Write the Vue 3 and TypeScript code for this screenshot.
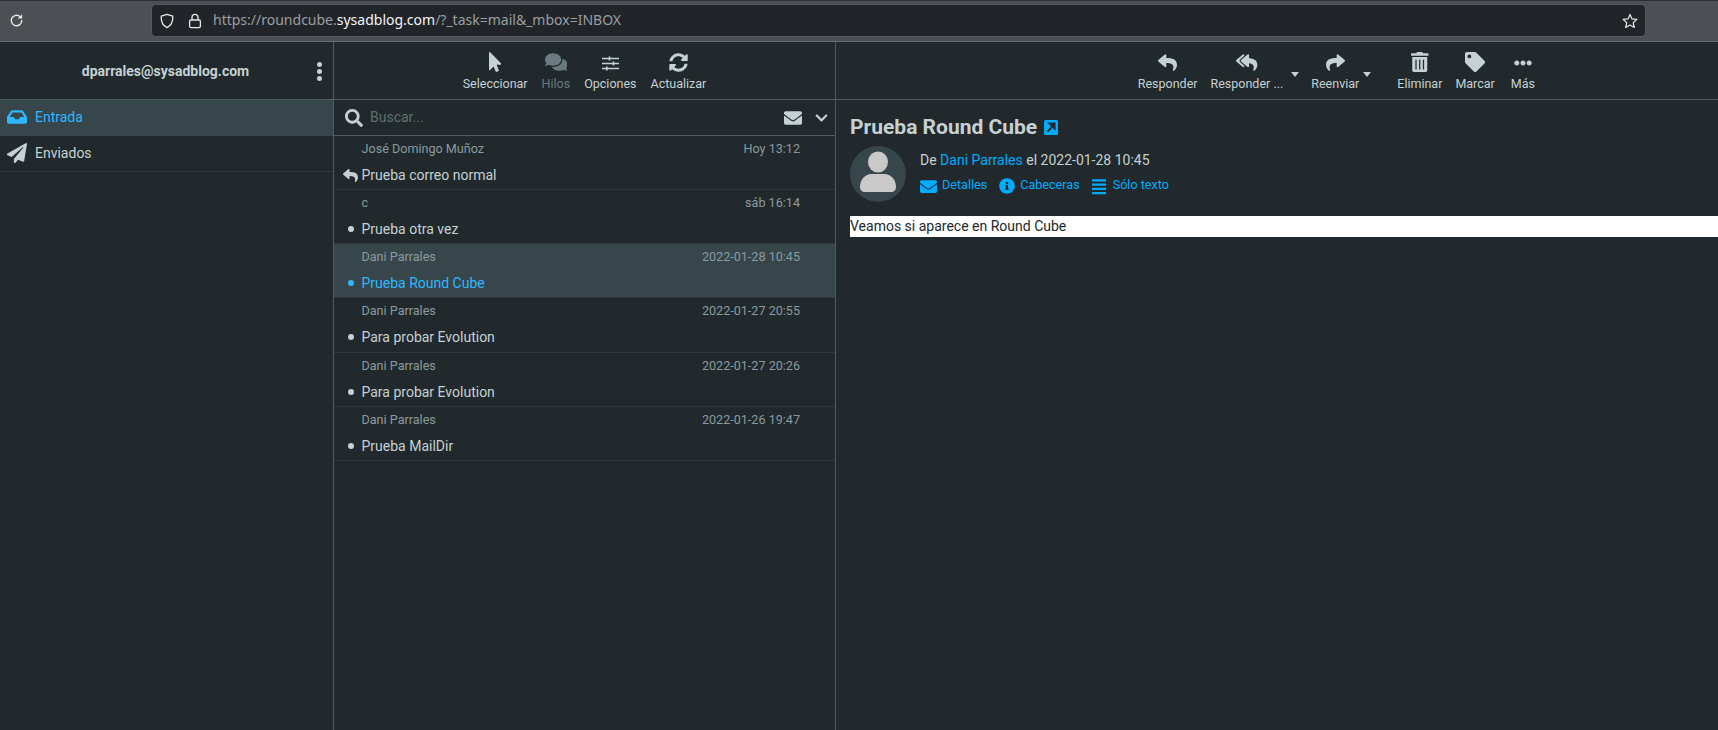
<script setup lang="ts">
type Icon = { w: number; d: string };

const icons: Record<string, Icon> = {
  reply: { w: 512, d: "M8.309 189.836L184.313 37.851C199.719 24.546 224 35.347 224 56.015v80.053c160.629 1.839 288 34.032 288 186.258 0 61.441-39.581 122.309-83.333 154.132-13.653 9.931-33.111-2.533-28.077-18.631 45.344-145.012-21.507-183.51-176.59-185.742V360c0 20.7-24.3 31.453-39.687 18.164l-176.004-152c-11.071-9.562-11.086-26.753 0-36.328z" },
  replyAll: { w: 576, d: "M136.309 189.836L312.313 37.851C327.72 24.546 352 35.348 352 56.015v82.763c129.182 10.231 224 52.212 224 183.548 0 61.441-39.582 122.309-83.333 154.132-13.653 9.931-33.111-2.533-28.077-18.631 38.512-123.162-3.922-169.482-112.59-182.015v84.175c0 20.701-24.3 31.453-39.687 18.164L136.309 226.164c-11.071-9.561-11.086-26.753 0-36.328zm-128 36.328L184.313 378.15C199.7 391.439 224 380.687 224 359.986v-15.818l-108.606-93.785A55.96 55.96 0 0 1 96 207.998a55.953 55.953 0 0 1 19.393-42.38L224 71.832V56.015c0-20.667-24.28-31.469-39.687-18.164L8.309 189.836c-11.086 9.575-11.071 26.767 0 36.328z" },
  share: { w: 512, d: "M503.691 189.836L327.687 37.851C312.281 24.546 288 35.347 288 56.015v80.053C127.371 137.907 0 170.1 0 322.326c0 61.441 39.581 122.309 83.333 154.132 13.653 9.931 33.111-2.533 28.077-18.631C66.066 312.814 132.917 274.316 288 272.085V360c0 20.7 24.3 31.453 39.687 18.164l176.004-152c11.071-9.562 11.086-26.753 0-36.328z" },
  trash: { w: 448, d: "M32 464a48 48 0 0 0 48 48h288a48 48 0 0 0 48-48V128H32zm272-256a16 16 0 0 1 32 0v224a16 16 0 0 1-32 0zm-96 0a16 16 0 0 1 32 0v224a16 16 0 0 1-32 0zm-96 0a16 16 0 0 1 32 0v224a16 16 0 0 1-32 0zM432 32H312l-9.4-18.7A24 24 0 0 0 281.1 0H166.8a23.72 23.72 0 0 0-21.4 13.3L136 32H16A16 16 0 0 0 0 48v32a16 16 0 0 0 16 16h416a16 16 0 0 0 16-16V48a16 16 0 0 0-16-16z" },
  tag: { w: 512, d: "M0 252.118V48C0 21.49 21.49 0 48 0h204.118a48 48 0 0 1 33.941 14.059l211.882 211.882c18.745 18.745 18.745 49.137 0 67.882L293.823 497.941c-18.745 18.745-49.137 18.745-67.882 0L14.059 286.059A48 48 0 0 1 0 252.118zM112 64c-26.51 0-48 21.49-48 48s21.49 48 48 48 48-21.49 48-48-21.49-48-48-48z" },
  more: { w: 512, d: "M328 256c0 39.8-32.2 72-72 72s-72-32.2-72-72 32.2-72 72-72 72 32.2 72 72zm104-72c-39.8 0-72 32.2-72 72s32.2 72 72 72 72-32.2 72-72-32.2-72-72-72zm-352 0c-39.8 0-72 32.2-72 72s32.2 72 72 72 72-32.2 72-72-32.2-72-72-72z" },
  pointer: { w: 320, d: "M302.189 329.126H196.105l55.831 135.993c3.889 9.428-.555 19.999-9.444 23.999l-49.165 21.427c-9.165 4-19.443-.571-23.332-9.714l-53.053-129.136-86.664 89.138C18.729 472.71 0 463.554 0 447.977V18.299C0 1.899 19.921-6.096 30.277 5.443l284.412 292.542c11.472 11.179 3.007 31.141-12.5 31.141z" },
  comments: { w: 576, d: "M416 192c0-88.4-93.1-160-208-160S0 103.6 0 192c0 34.3 14.1 65.9 38 92-13.4 30.2-35.5 54.2-35.8 54.5-2.2 2.3-2.8 5.7-1.5 8.7S4.8 352 8 352c36.6 0 66.9-12.3 88.7-25 32.2 15.7 70.3 25 111.3 25 114.9 0 208-71.6 208-160zm122 220c23.9-26 38-57.7 38-92 0-66.9-53.5-124.2-129.3-148.1.9 6.6 1.3 13.3 1.3 20.1 0 105.9-107.7 192-240 192-10.8 0-21.3-.8-31.7-1.9C207.8 439.6 281.8 480 368 480c41 0 79.1-9.2 111.3-25 21.8 12.7 52.1 25 88.7 25 3.2 0 6.1-1.9 7.3-4.8 1.3-2.9.7-6.3-1.5-8.7-.3-.3-22.4-24.2-35.8-54.5z" },
  sliders: { w: 512, d: "M0 86h200V46h50v40h262v40H250v40h-50v-40H0zM0 236h320v-40h50v40h142v40H370v40h-50v-40H0zM0 386h120v-40h50v40h342v40H170v40h-50v-40H0z" },
  sync: { w: 512, d: "M370.72 133.28C339.458 104.008 298.888 87.962 255.848 88c-77.458.068-144.328 53.178-162.791 126.85-1.344 5.363-6.122 9.15-11.651 9.15H24.103c-7.498 0-13.194-6.807-11.807-14.176C33.933 94.924 134.813 8 256 8c66.448 0 126.791 26.136 171.315 68.685L463.03 40.97C478.149 25.851 504 36.559 504 57.941V192c0 13.255-10.745 24-24 24H345.941c-21.382 0-32.09-25.851-16.971-40.971l41.75-41.749zM32 296h134.059c21.382 0 32.09 25.851 16.971 40.971l-41.75 41.75c31.262 29.273 71.835 45.319 114.876 45.28 77.418-.07 144.315-53.144 162.787-126.849 1.344-5.363 6.122-9.15 11.651-9.15h57.304c7.498 0 13.194 6.807 11.807 14.176C478.067 417.076 377.187 504 256 504c-66.448 0-126.791-26.136-171.315-68.685L48.97 471.03C33.851 486.149 8 475.441 8 454.059V320c0-13.255 10.745-24 24-24z" },
  search: { w: 512, d: "M505 442.7L405.3 343c-4.5-4.5-10.6-7-17-7H372c27.6-35.3 44-79.7 44-128C416 93.1 322.9 0 208 0S0 93.1 0 208s93.1 208 208 208c48.3 0 92.7-16.4 128-44v16.3c0 6.4 2.5 12.5 7 17l99.7 99.7c9.4 9.4 24.6 9.4 33.9 0l28.3-28.3c9.4-9.4 9.4-24.6.1-34zM208 336c-70.7 0-128-57.2-128-128 0-70.7 57.2-128 128-128 70.7 0 128 57.2 128 128 0 70.7-57.2 128-128 128z" },
  envelope: { w: 512, d: "M502.3 190.8c3.9-3.1 9.7-.2 9.7 4.7V400c0 26.5-21.5 48-48 48H48c-26.5 0-48-21.5-48-48V195.6c0-5 5.7-7.8 9.7-4.7 22.4 17.4 52.1 39.5 154.1 113.6 21.1 15.4 56.7 47.8 92.2 47.6 35.7.3 72-32.8 92.3-47.6 102-74.1 131.6-96.3 154-113.7zM256 320c23.2.4 56.6-29.2 73.4-41.4 132.7-96.3 142.8-104.7 173.4-128.7 5.8-4.5 9.2-11.5 9.2-18.9v-19c0-26.5-21.5-48-48-48H48C21.5 64 0 85.5 0 112v19c0 7.4 3.4 14.3 9.2 18.9 30.6 23.9 40.7 32.4 173.4 128.7 16.8 12.2 50.2 41.8 73.4 41.4z" },
  chevron: { w: 448, d: "M207.029 381.476L12.686 187.132c-9.373-9.373-9.373-24.569 0-33.941l22.667-22.667c9.357-9.357 24.522-9.375 33.901-.04L224 284.505l154.745-154.021c9.379-9.335 24.544-9.317 33.901.04l22.667 22.667c9.373 9.373 9.373 24.569 0 33.941L240.971 381.476c-9.373 9.372-24.569 9.372-33.942 0z" },
  inbox: { w: 576, d: "M567.938 243.908L462.25 85.374A48.003 48.003 0 0 0 422.311 64H153.689a48 48 0 0 0-39.938 21.374L8.062 243.908A47.994 47.994 0 0 0 0 270.533V400c0 26.51 21.49 48 48 48h480c26.51 0 48-21.49 48-48V270.533a47.994 47.994 0 0 0-8.062-26.625zM162.252 128h251.497l85.333 128H376l-32 64H232l-32-64H76.918l85.334-128z" },
  plane: { w: 512, d: "M476 3.2L12.5 270.6c-18.1 10.4-15.8 35.6 2.2 43.2L121 358.4l287.3-253.2c5.5-4.9 13.3 2.6 8.6 8.3L176 407v80.5c0 23.6 28.5 32.9 42.5 15.8L282 426l124.6 52.2c14.2 6 30.4-2.9 33-18.2l72-432C515 7.8 493.3-6.8 476 3.2z" },
  info: { w: 512, d: "M256 8C119.043 8 8 119.083 8 256c0 136.997 111.043 248 248 248s248-111.003 248-248C504 119.083 392.957 8 256 8zm0 110c23.196 0 42 18.804 42 42s-18.804 42-42 42-42-18.804-42-42 18.804-42 42-42zm56 254c0 6.627-5.373 12-12 12h-88c-6.627 0-12-5.373-12-12v-24c0-6.627 5.373-12 12-12h12v-64h-12c-6.627 0-12-5.373-12-12v-24c0-6.627 5.373-12 12-12h64c6.627 0 12 5.373 12 12v100h12c6.627 0 12 5.373 12 12v24z" },
  lines: { w: 512, d: "M0 40h512v64H0zM0 168h512v64H0zM0 296h512v64H0zM0 424h512v64H0z" },
};

const listTools = [
  { label: "Seleccionar", icon: "pointer", h: 20 },
  { label: "Hilos", icon: "comments", h: 20, off: true },
  { label: "Opciones", icon: "sliders", h: 17 },
  { label: "Actualizar", icon: "sync", h: 19 },
];

const mailTools = [
  { label: "Responder", icon: "reply", h: 19 },
  { label: "Responder ...", icon: "replyAll", h: 19, caret: "wide" },
  { label: "Reenviar", icon: "share", h: 19, caret: "near" },
  { label: "Eliminar", icon: "trash", h: 20 },
  { label: "Marcar", icon: "tag", h: 20 },
  { label: "Más", icon: "more", h: 18, caret: "last" },
];

const folders = [
  { name: "Entrada", icon: "inbox", selected: true },
  { name: "Enviados", icon: "plane", selected: false },
];

const messages = [
  { from: "José Domingo Muñoz", date: "Hoy 13:12", subject: "Prueba correo normal", replied: true },
  { from: "c", date: "sáb 16:14", subject: "Prueba otra vez" },
  { from: "Dani Parrales", date: "2022-01-28 10:45", subject: "Prueba Round Cube", selected: true },
  { from: "Dani Parrales", date: "2022-01-27 20:55", subject: "Para probar Evolution" },
  { from: "Dani Parrales", date: "2022-01-27 20:26", subject: "Para probar Evolution" },
  { from: "Dani Parrales", date: "2022-01-26 19:47", subject: "Prueba MailDir" },
];

const headerLinks = [
  { label: "Detalles", icon: "envelope", size: 17 },
  { label: "Cabeceras", icon: "info", size: 16 },
  { label: "Sólo texto", icon: "lines", size: 14 },
];
</script>

<template>
  <div class="page">
    <header class="browserBar">
      <svg class="reload" viewBox="0 0 16 16" width="15" height="15">
        <path d="M13.6 8a5.6 5.6 0 1 1-1.7-4" fill="none" stroke="currentColor" stroke-width="1.5" stroke-linecap="round" />
        <path d="M14 1.2v4.6H9.4z" fill="currentColor" />
      </svg>
      <div class="urlBar">
        <svg class="shield" viewBox="0 0 16 16" width="16" height="16">
          <path d="M8 1.3 2.2 3.2c-.2 4.6.9 9 5.8 11.5 4.9-2.5 6-6.9 5.8-11.5z" fill="none" stroke="currentColor" stroke-width="1.3" stroke-linejoin="round" />
        </svg>
        <svg class="lock" viewBox="0 0 14 16" width="14" height="16">
          <rect x="1.6" y="7" width="10.8" height="7.6" rx="1.4" fill="none" stroke="currentColor" stroke-width="1.3" />
          <path d="M4 7V4.4a3 3 0 0 1 6 0V7" fill="none" stroke="currentColor" stroke-width="1.3" />
        </svg>
        <span class="url">https://roundcube.<b>sysadblog.com</b>/?_task=mail&amp;_mbox=INBOX</span>
        <svg class="star" viewBox="0 0 16 16" width="16" height="16">
          <path d="M8 1.4l2 4.5 4.9.5-3.7 3.3 1.1 4.8L8 12.1l-4.3 2.4 1.1-4.8L1.1 6.4 6 5.9z" fill="none" stroke="currentColor" stroke-width="1.2" stroke-linejoin="round" />
        </svg>
      </div>
    </header>

    <div class="layout">
      <aside class="folders">
        <div class="panelHead account">
          <span class="email">dparrales@sysadblog.com</span>
          <span class="kebab"><i /><i /><i /></span>
        </div>
        <div
          v-for="f in folders"
          :key="f.name"
          class="folder"
          :class="{ selected: f.selected }"
        >
          <svg class="folderIcon" :viewBox="`0 0 ${icons[f.icon].w} 512`"><path :d="icons[f.icon].d" /></svg>
          <span>{{ f.name }}</span>
        </div>
      </aside>

      <section class="list">
        <div class="panelHead toolbar center">
          <div v-for="t in listTools" :key="t.label" class="tool" :class="{ off: t.off }">
            <svg :viewBox="`0 0 ${icons[t.icon].w} 512`" :height="t.h"><path :d="icons[t.icon].d" /></svg>
            <span>{{ t.label }}</span>
          </div>
        </div>
        <div class="searchRow">
          <svg class="searchIcon" viewBox="0 0 512 512"><path :d="icons.search.d" /></svg>
          <span class="placeholder">Buscar...</span>
          <svg class="filterIcon" viewBox="0 0 512 512"><path :d="icons.envelope.d" /></svg>
          <svg class="chevron" viewBox="0 0 448 512"><path :d="icons.chevron.d" /></svg>
        </div>
        <div
          v-for="(m, i) in messages"
          :key="i"
          class="message"
          :class="{ selected: m.selected }"
        >
          <div class="meta">
            <span>{{ m.from }}</span>
            <span>{{ m.date }}</span>
          </div>
          <div class="subject">
            <span class="flag">
              <svg v-if="m.replied" class="replied" viewBox="0 0 512 512"><path :d="icons.reply.d" /></svg>
              <i v-else class="dot" />
            </span>
            <span>{{ m.subject }}</span>
          </div>
        </div>
      </section>

      <main class="content">
        <div class="panelHead toolbar right">
          <div
            v-for="t in mailTools"
            :key="t.label"
            class="tool"
            :class="t.caret"
          >
            <svg :viewBox="`0 0 ${icons[t.icon].w} 512`" :height="t.h"><path :d="icons[t.icon].d" /></svg>
            <span>{{ t.label }}</span>
            <i v-if="t.caret === 'wide' || t.caret === 'near'" class="caret" />
          </div>
        </div>
        <div class="mailHead">
          <h1>
            Prueba Round Cube
            <svg class="openIcon" viewBox="0 0 14 15" width="14" height="15">
              <rect width="14" height="15" rx="1.5" fill="#00acff" />
              <path d="M3.4 11.6 9.6 5.2M5.6 3.6h5v5z" stroke="#21292c" stroke-width="2" fill="#21292c" />
            </svg>
          </h1>
          <div class="sender">
            <div class="avatar">
              <svg viewBox="0 0 36 42" width="36" height="42">
                <ellipse cx="18" cy="11" rx="10" ry="10.5" fill="#c9c9c9" />
                <path d="M0 36c0-8 6-13 11-13h14c5 0 11 5 11 13 0 3-2 5-5 5H5c-3 0-5-2-5-5z" fill="#c9c9c9" />
              </svg>
            </div>
            <div class="senderInfo">
              <div class="fromLine">De <a>Dani Parrales</a> el 2022-01-28 10:45</div>
              <div class="links">
                <a v-for="l in headerLinks" :key="l.label">
                  <svg
                    viewBox="0 0 512 512"
                    preserveAspectRatio="none"
                    :class="l.icon"
                    :width="l.size"
                    :height="l.icon === 'lines' ? 17 : l.size"
                  ><path :d="icons[l.icon].d" /></svg>
                  {{ l.label }}
                </a>
              </div>
            </div>
          </div>
        </div>
        <div class="mailBody">Veamos si aparece en Round Cube</div>
      </main>
    </div>
  </div>
</template>

<style scoped>
.page {
  display: flex;
  flex-direction: column;
  height: 730px;
  overflow: hidden;
  background: #21292c;
  color: #c5d1d3;
  font-family: Roboto, "Liberation Sans", sans-serif;
  font-size: 14px;
}

.browserBar {
  display: flex;
  align-items: center;
  flex: none;
  height: 42px;
  box-sizing: border-box;
  padding: 0 73px 1px 9px;
  gap: 128px;
  color: #e8e8e8;
  background: #4c4f54;
  border-top: 1px solid #2b2d30;
  border-bottom: 1px solid #6a6d70;
}

.reload {
  flex: none;
}

.urlBar {
  display: flex;
  align-items: center;
  flex: 1;
  height: 31px;
  box-sizing: border-box;
  padding: 0 7px 0 7px;
  background: #212529;
  border-radius: 4px;
  box-shadow: 0 0 0 1px #55585c;
}

.lock {
  margin-left: 13px;
}

.url {
  flex: 1;
  margin-left: 11px;
  padding-bottom: 2px;
  font-family: "Noto Sans", sans-serif;
  font-size: 14px;
  color: #9b9ea1;
}

.url b {
  font-weight: 400;
  color: #f4f4f4;
}

.layout {
  display: flex;
  flex: 1;
  min-height: 0;
}

.folders {
  flex: none;
  width: 334px;
  box-sizing: border-box;
  border-right: 1px solid #4d5e63;
}

.list {
  flex: none;
  width: 502px;
  box-sizing: border-box;
  border-right: 1px solid #4d5e63;
}

.content {
  flex: 1;
  min-width: 0;
}

.panelHead {
  display: flex;
  align-items: center;
  height: 58px;
  box-sizing: border-box;
  border-bottom: 1px solid #4d5e63;
}

.account {
  justify-content: center;
  position: relative;
}

.email {
  margin-right: 2px;
  font-size: 14px;
  font-weight: 700;
}

.kebab {
  position: absolute;
  left: 317px;
  top: 20px;
  display: flex;
  flex-direction: column;
  gap: 2px;
}

.kebab i {
  width: 5px;
  height: 5px;
  background: #c5d1d3;
  border-radius: 50%;
}

.folder {
  display: flex;
  align-items: center;
  height: 36px;
  box-sizing: border-box;
  padding: 0 0 2px 7px;
  gap: 8px;
  border-bottom: 1px solid #2f393d;
}

.folder.selected {
  color: #2db8ff;
  background: #37464b;
  border-bottom-color: #37464b;
}

.folderIcon {
  width: 20px;
  height: 20px;
  fill: currentColor;
}

.toolbar {
  gap: 14px;
}

.toolbar.center {
  justify-content: center;
}

.toolbar.right {
  justify-content: flex-end;
  gap: 13px;
  padding-right: 183px;
}

.tool {
  position: relative;
  display: flex;
  flex-direction: column;
  align-items: center;
  justify-content: flex-end;
  height: 43px;
  margin-bottom: 1px;
  font-size: 12.5px;
  line-height: 16px;
  white-space: nowrap;
}

.tool svg {
  flex: none;
  margin-bottom: 4px;
  fill: currentColor;
}

.tool.off {
  color: #6b7a7f;
}

.tool.wide {
  margin-right: 15px;
}

.tool.near {
  margin-right: 25px;
}

.tool.last {
  margin-left: 3px;
}

.caret {
  position: absolute;
  top: 23px;
  right: -16px;
  width: 0;
  height: 0;
  border: 4px solid transparent;
  border-top: 5px solid #c5d1d3;
  border-bottom: 0;
}

.tool.near .caret {
  right: -12px;
}

.searchRow {
  display: flex;
  align-items: center;
  height: 36px;
  box-sizing: border-box;
  padding: 0 7px 0 11px;
  border-bottom: 1px solid #4d5e63;
}

.searchIcon {
  width: 18px;
  height: 18px;
  fill: #c5d1d3;
}

.placeholder {
  flex: 1;
  margin-left: 7px;
  padding-bottom: 2px;
  color: #5f6e73;
}

.filterIcon {
  width: 18px;
  height: 18px;
  fill: #c5d1d3;
}

.chevron {
  width: 13px;
  height: 14px;
  margin-left: 13px;
  fill: #c5d1d3;
}

.message {
  height: 54.15px;
  box-sizing: border-box;
  padding: 4px 35px 0 27.5px;
  border-bottom: 1px solid #2f393d;
}

.message.selected {
  background: #37464b;
}

.meta {
  display: flex;
  justify-content: space-between;
  height: 18px;
  font-size: 12.6px;
  line-height: 18px;
  color: #8b9a9f;
}

.subject {
  position: relative;
  margin-top: 8px;
  line-height: 18px;
  font-size: 14px;
}

.message.selected .subject {
  color: #2db8ff;
}

.flag {
  position: absolute;
  left: -19px;
  top: 2px;
  width: 16px;
  height: 14px;
  display: flex;
  align-items: center;
  justify-content: center;
}

.dot {
  width: 6px;
  height: 6px;
  background: currentColor;
  border-radius: 50%;
}

.replied {
  width: 15px;
  height: 15px;
  fill: #c5d1d3;
}

.mailHead {
  padding: 15px 13px 0 14px;
}

h1 {
  display: flex;
  align-items: center;
  gap: 7px;
  margin: 0;
  font-size: 21px;
  line-height: 24px;
  font-weight: 700;
}

.sender {
  display: flex;
  margin-top: 7px;
  gap: 14px;
}

.avatar {
  display: flex;
  align-items: flex-end;
  justify-content: center;
  width: 56px;
  height: 56px;
  padding-bottom: 9px;
  box-sizing: border-box;
  background: #37464b;
  border-radius: 50%;
}

.senderInfo {
  padding-top: 5px;
}

.fromLine {
  line-height: 18px;
}

a {
  color: #00acff;
}

.links {
  display: flex;
  gap: 12px;
  margin-top: 7px;
  font-size: 12.6px;
  line-height: 18px;
}

.links a {
  display: flex;
  align-items: center;
  gap: 5px;
}

.links svg {
  margin: 1px 0 -1px;
  fill: currentColor;
}

.links svg.lines {
  margin-right: 2px;
}

.mailBody {
  margin: 14px 0 0 14px;
  height: 21px;
  line-height: 21px;
  background: #fff;
  color: #21292c;
}
</style>
